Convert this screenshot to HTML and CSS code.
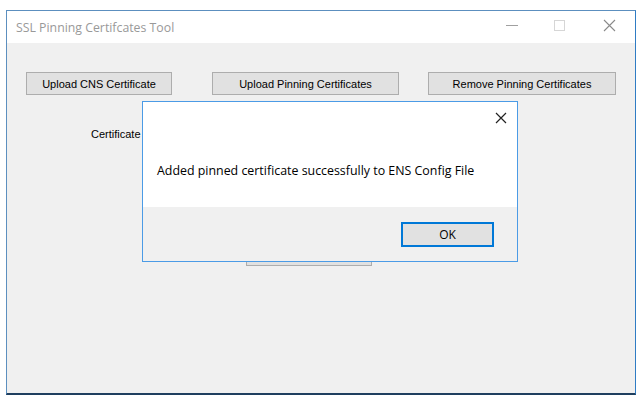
FILE: index.html
```html
<!DOCTYPE html>
<html lang="en">
<head>
    <meta charset="UTF-8">
    <title>SSL Pinning Certifcates Tool</title>
    <link rel="stylesheet" href="styles.css">
</head>
<body>
    <div class="window">
        <div class="titlebar">
            <span class="title">SSL Pinning Certifcates Tool</span>
            <div class="caption-buttons">
                <svg class="cap" width="46" height="20" viewBox="0 0 46 20"><line x1="17" y1="10.5" x2="29" y2="10.5" stroke="#a0a0a0" stroke-width="1"/></svg>
                <svg class="cap" width="50" height="20" viewBox="0 0 50 20"><rect x="19.5" y="5.5" width="10" height="10" fill="none" stroke="#d6d6d6" stroke-width="1"/></svg>
                <svg class="cap" width="50" height="20" viewBox="0 0 50 20"><path d="M19 5 L30 16 M30 5 L19 16" stroke="#8a8a8a" stroke-width="1.1"/></svg>
            </div>
        </div>
        <div class="client">
            <div class="toolbar">
                <button class="btn btn-cns">Upload CNS Certificate</button>
                <button class="btn btn-upload">Upload Pinning Certificates</button>
                <button class="btn btn-remove">Remove Pinning Certificates</button>
            </div>
            <div class="field">
                <label class="field-label">Certificate</label>
            </div>
            <div class="actions">
                <button class="btn btn-hidden">Save</button>
            </div>
        </div>
    </div>

    <div class="msgbox">
        <div class="msg-body">
            <svg class="msg-close" width="12" height="12" viewBox="0 0 12 12"><path d="M1 1 L11 11 M11 1 L1 11" stroke="#222" stroke-width="1.2"/></svg>
            <p class="msg-text">Added pinned certificate successfully to ENS Config File</p>
        </div>
        <div class="msg-footer">
            <button class="btn btn-ok">OK</button>
        </div>
    </div>
</body>
</html>
```

FILE: styles.css
```css
body {
    margin: 0;
    background-color: #FFFFFF;
    font-family: 'Liberation Sans', Arial, sans-serif;
    font-size: 11px;
    color: #000000;
    position: relative;
    height: 399px;
    overflow: hidden;
}
.window {
    margin: 10px 0 0 6px;
    width: 628px;
    height: 382px;
    border: 1px solid #5c8fbf;
    border-right-color: #2f7cc4;
    border-bottom: 2px solid #1f3f5f;
    background-color: #F0F0F0;
    display: flex;
    flex-direction: column;
}
.titlebar {
    height: 32px;
    background-color: #FFFFFF;
    display: flex;
    align-items: center;
    justify-content: space-between;
}
.title {
    font-family: 'Open Sans', 'Noto Sans', sans-serif;
    font-size: 12.3px;
    color: #999999;
    margin-left: 9px;
}
.caption-buttons {
    display: flex;
}
.cap {
    display: block;
    margin-top: -5px;
}
.client {
    flex: 1;
    display: flex;
    flex-direction: column;
}
.toolbar {
    display: flex;
    padding: 29px 0 0 19px;
}
.btn {
    font-family: 'Liberation Sans', Arial, sans-serif;
    font-size: 11px;
    color: #000000;
    background-color: #E1E1E1;
    border: 1px solid #ADADAD;
    height: 23px;
    padding: 0;
}
.btn-cns {
    width: 146px;
}
.btn-upload {
    width: 187px;
    margin-left: 40px;
}
.btn-remove {
    width: 188px;
    margin-left: 29px;
}
.field {
    padding: 32px 0 0 84px;
}
.field-label {
    display: block;
    line-height: 14px;
}
.actions {
    padding: 102px 0 0 239px;
}
.btn-hidden {
    width: 126px;
    color: transparent;
}
.msgbox {
    position: absolute;
    left: 142px;
    top: 101px;
    width: 374px;
    height: 159px;
    border: 1px solid #4b9be6;
    background-color: #F0F0F0;
    display: flex;
    flex-direction: column;
}
.msg-body {
    position: relative;
    height: 105px;
    background-color: #FFFFFF;
    display: flex;
    align-items: flex-end;
}
.msg-close {
    position: absolute;
    right: 10px;
    top: 10px;
}
.msg-text {
    margin: 0 0 28px 14px;
    font-family: 'Open Sans', 'Noto Sans', sans-serif;
    font-size: 12.4px;
    line-height: 16px;
}
.msg-footer {
    flex: 1;
    display: flex;
    justify-content: flex-end;
    align-items: flex-start;
    padding: 15px 23px 0 0;
}
.btn-ok {
    width: 93px;
    height: 25px;
    border: 2px solid #0078D7;
    font-family: 'Open Sans', 'Noto Sans', sans-serif;
    font-size: 12px;
}
```
